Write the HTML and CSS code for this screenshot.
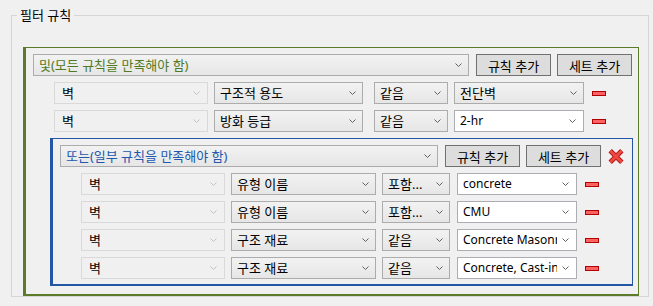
FILE: index.html
```html
<!DOCTYPE html>
<html lang="ko">

<head>
    <meta charset="UTF-8">
    <title>필터 규칙</title>
    <link rel="stylesheet" href="styles.css">
</head>

<body>

    <fieldset class="filter-group">
        <legend>필터 규칙</legend>

        <!-- 및 세트 -->
        <div class="rule-set set-and">
            <div class="set-header">
                <div class="combo combo-head">
                    <span class="combo-text">및(모든 규칙을 만족해야 함)</span>
                    <svg class="arrow" width="7" height="4" viewBox="0 0 7 4"><polyline points="0.5,0.5 3.5,3.5 6.5,0.5" /></svg>
                </div>
                <button class="btn">규칙 추가</button>
                <button class="btn">세트 추가</button>
            </div>

            <div class="rule-row">
                <div class="combo disabled c1"><span class="combo-text">벽</span><svg class="arrow" width="7" height="4" viewBox="0 0 7 4"><polyline points="0.5,0.5 3.5,3.5 6.5,0.5" /></svg></div>
                <div class="combo c2"><span class="combo-text">구조적 용도</span><svg class="arrow" width="7" height="4" viewBox="0 0 7 4"><polyline points="0.5,0.5 3.5,3.5 6.5,0.5" /></svg></div>
                <div class="combo c3"><span class="combo-text">같음</span><svg class="arrow" width="7" height="4" viewBox="0 0 7 4"><polyline points="0.5,0.5 3.5,3.5 6.5,0.5" /></svg></div>
                <div class="combo c4"><span class="combo-text">전단벽</span><svg class="arrow" width="7" height="4" viewBox="0 0 7 4"><polyline points="0.5,0.5 3.5,3.5 6.5,0.5" /></svg></div>
                <span class="remove"></span>
            </div>

            <div class="rule-row">
                <div class="combo disabled c1"><span class="combo-text">벽</span><svg class="arrow" width="7" height="4" viewBox="0 0 7 4"><polyline points="0.5,0.5 3.5,3.5 6.5,0.5" /></svg></div>
                <div class="combo c2"><span class="combo-text">방화 등급</span><svg class="arrow" width="7" height="4" viewBox="0 0 7 4"><polyline points="0.5,0.5 3.5,3.5 6.5,0.5" /></svg></div>
                <div class="combo c3"><span class="combo-text">같음</span><svg class="arrow" width="7" height="4" viewBox="0 0 7 4"><polyline points="0.5,0.5 3.5,3.5 6.5,0.5" /></svg></div>
                <div class="combo edit latin c4"><span class="combo-text">2-hr</span><svg class="arrow" width="7" height="4" viewBox="0 0 7 4"><polyline points="0.5,0.5 3.5,3.5 6.5,0.5" /></svg></div>
                <span class="remove"></span>
            </div>

            <!-- 또는 세트 -->
            <div class="rule-set set-or">
                <div class="set-header">
                    <div class="combo combo-head">
                        <span class="combo-text">또는(일부 규칙을 만족해야 함)</span>
                        <svg class="arrow" width="7" height="4" viewBox="0 0 7 4"><polyline points="0.5,0.5 3.5,3.5 6.5,0.5" /></svg>
                    </div>
                    <button class="btn">규칙 추가</button>
                    <button class="btn">세트 추가</button>
                    <svg class="delete-set" width="16" height="15" viewBox="0 0 16 15">
                        <path class="x-edge" d="M2.2 1.8 L13.8 13.2 M13.8 1.8 L2.2 13.2" />
                        <path class="x-fill" d="M2.2 1.8 L13.8 13.2 M13.8 1.8 L2.2 13.2" />
                    </svg>
                </div>

                <div class="rule-row">
                    <div class="combo disabled c1"><span class="combo-text">벽</span><svg class="arrow" width="7" height="4" viewBox="0 0 7 4"><polyline points="0.5,0.5 3.5,3.5 6.5,0.5" /></svg></div>
                    <div class="combo c2"><span class="combo-text">유형 이름</span><svg class="arrow" width="7" height="4" viewBox="0 0 7 4"><polyline points="0.5,0.5 3.5,3.5 6.5,0.5" /></svg></div>
                    <div class="combo c3"><span class="combo-text">포함...</span><svg class="arrow" width="7" height="4" viewBox="0 0 7 4"><polyline points="0.5,0.5 3.5,3.5 6.5,0.5" /></svg></div>
                    <div class="combo edit latin c4"><span class="combo-text">concrete</span><svg class="arrow" width="7" height="4" viewBox="0 0 7 4"><polyline points="0.5,0.5 3.5,3.5 6.5,0.5" /></svg></div>
                    <span class="remove"></span>
                </div>

                <div class="rule-row">
                    <div class="combo disabled c1"><span class="combo-text">벽</span><svg class="arrow" width="7" height="4" viewBox="0 0 7 4"><polyline points="0.5,0.5 3.5,3.5 6.5,0.5" /></svg></div>
                    <div class="combo c2"><span class="combo-text">유형 이름</span><svg class="arrow" width="7" height="4" viewBox="0 0 7 4"><polyline points="0.5,0.5 3.5,3.5 6.5,0.5" /></svg></div>
                    <div class="combo c3"><span class="combo-text">포함...</span><svg class="arrow" width="7" height="4" viewBox="0 0 7 4"><polyline points="0.5,0.5 3.5,3.5 6.5,0.5" /></svg></div>
                    <div class="combo edit latin c4"><span class="combo-text">CMU</span><svg class="arrow" width="7" height="4" viewBox="0 0 7 4"><polyline points="0.5,0.5 3.5,3.5 6.5,0.5" /></svg></div>
                    <span class="remove"></span>
                </div>

                <div class="rule-row">
                    <div class="combo disabled c1"><span class="combo-text">벽</span><svg class="arrow" width="7" height="4" viewBox="0 0 7 4"><polyline points="0.5,0.5 3.5,3.5 6.5,0.5" /></svg></div>
                    <div class="combo c2"><span class="combo-text">구조 재료</span><svg class="arrow" width="7" height="4" viewBox="0 0 7 4"><polyline points="0.5,0.5 3.5,3.5 6.5,0.5" /></svg></div>
                    <div class="combo c3"><span class="combo-text">같음</span><svg class="arrow" width="7" height="4" viewBox="0 0 7 4"><polyline points="0.5,0.5 3.5,3.5 6.5,0.5" /></svg></div>
                    <div class="combo edit latin c4"><span class="combo-text">Concrete Masonry Units</span><svg class="arrow" width="7" height="4" viewBox="0 0 7 4"><polyline points="0.5,0.5 3.5,3.5 6.5,0.5" /></svg></div>
                    <span class="remove"></span>
                </div>

                <div class="rule-row">
                    <div class="combo disabled c1"><span class="combo-text">벽</span><svg class="arrow" width="7" height="4" viewBox="0 0 7 4"><polyline points="0.5,0.5 3.5,3.5 6.5,0.5" /></svg></div>
                    <div class="combo c2"><span class="combo-text">구조 재료</span><svg class="arrow" width="7" height="4" viewBox="0 0 7 4"><polyline points="0.5,0.5 3.5,3.5 6.5,0.5" /></svg></div>
                    <div class="combo c3"><span class="combo-text">같음</span><svg class="arrow" width="7" height="4" viewBox="0 0 7 4"><polyline points="0.5,0.5 3.5,3.5 6.5,0.5" /></svg></div>
                    <div class="combo edit latin c4"><span class="combo-text">Concrete, Cast-in-Place</span><svg class="arrow" width="7" height="4" viewBox="0 0 7 4"><polyline points="0.5,0.5 3.5,3.5 6.5,0.5" /></svg></div>
                    <span class="remove"></span>
                </div>
            </div>
        </div>
    </fieldset>

</body>

</html>
```

FILE: styles.css
```css
* {
    box-sizing: border-box;
}

body {
    margin: 0;
    background: #f0f0f0;
    color: #000000;
    font-family: "Noto Sans", "Noto Sans CJK KR", sans-serif;
    font-size: 13px;
    overflow: hidden;
    height: 306px;
}

.filter-group {
    margin: 7px 4px 0 11px;
    padding: 0 9px 0 5px;
    border: 1px solid #d5d5d5;
    min-width: 0;
}

.filter-group legend {
    padding: 0 3px;
    line-height: 16px;
}

/* 규칙 세트 */
.rule-set {
    display: flex;
    flex-direction: column;
    gap: 6px;
    border-style: solid;
    border-width: 1px 1px 2px 3px;
}

.set-and {
    margin-top: 24px;
    margin-left: 6px;
    padding: 6px 3px 8px 7px;
    border-color: #5b7b2b;
}

.set-or {
    margin: 0 2px 0 17px;
    padding: 6px 3px 5px 7px;
    border-color: #2456a6;
}

.set-header {
    display: flex;
    align-items: center;
    height: 22px;
}

.set-and > .set-header {
    padding-right: 3px;
}

.set-or > .set-header {
    padding-right: 5px;
}

.combo-head {
    flex: 1;
    margin-right: 7px;
}

.set-and .combo-head .combo-text {
    color: #4f7a1f;
}

.set-or .combo-head .combo-text {
    color: #2158ad;
}

.btn {
    width: 75px;
    height: 22px;
    padding: 0;
    border: 1px solid #707070;
    background: #dddddd;
    font: inherit;
    color: #000000;
}

.btn + .btn {
    margin-left: 6px;
}

.delete-set {
    margin-left: 7px;
    flex: none;
}

.x-edge {
    stroke: #b3161a;
    stroke-width: 4.8;
    fill: none;
}

.x-fill {
    stroke: #f0473f;
    stroke-width: 3;
    fill: none;
}

/* 콤보 박스 */
.combo {
    display: flex;
    align-items: center;
    height: 22px;
    border: 1px solid #acacac;
    background: linear-gradient(#f2f2f2, #e6e6e6);
    padding-left: 5px;
}

.combo-text {
    flex: 1;
    min-width: 0;
    overflow: hidden;
    white-space: nowrap;
    line-height: 20px;
}

.arrow {
    flex: none;
    margin: 0 6px 0 3px;
    fill: none;
    stroke: #606060;
    stroke-width: 1;
}

.combo.disabled {
    border-color: #d9d9d9;
    background: #f0f0f0;
    padding-left: 7px;
}

.combo.disabled .arrow {
    stroke: #c2c2c2;
    margin-right: 7px;
}

.combo.edit {
    background: #ffffff;
    border-color: #abadb3;
}

.combo.edit .arrow {
    margin: 0 7px 0 5px;
}

.combo.latin {
    font-size: 12px;
}

/* 규칙 행 */
.rule-row {
    display: flex;
    align-items: center;
    padding-left: 21px;
}

.remove {
    width: 14px;
    height: 5px;
    margin-left: 8px;
    background: #ff6262;
    border: 1px solid #b00000;
    flex: none;
}

.set-and > .rule-row .c1 { width: 154px; }
.set-and > .rule-row .c2 { width: 149px; margin-left: 6px; }
.set-and > .rule-row .c3 { width: 74px; margin-left: 11px; }
.set-and > .rule-row .c4 { width: 130px; margin-left: 6px; }

.set-or > .rule-row .c1 { width: 144px; }
.set-or > .rule-row .c2 { width: 145px; margin-left: 6px; }
.set-or > .rule-row .c3 { width: 68px; margin-left: 6px; }
.set-or > .rule-row .c4 { width: 120px; margin-left: 7px; }
```
